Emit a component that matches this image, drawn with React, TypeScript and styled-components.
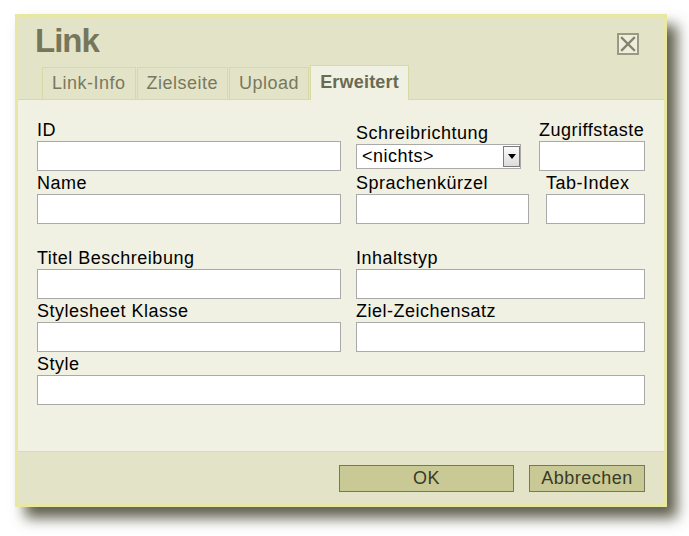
import * as React from 'react';
import styled, { createGlobalStyle } from 'styled-components';

const GlobalStyle = createGlobalStyle`
  html, body {
    margin: 0;
    padding: 0;
    background: #ffffff;
  }
  body {
    font-family: 'Liberation Sans', Arial, sans-serif;
  }
`;

const Page = styled.div`
  min-height: 536px;
  padding: 14px 0 0 15px;
  box-sizing: border-box;
`;

const Dialog = styled.div`
  width: 652px;
  height: 493px;
  box-sizing: border-box;
  border: 3px solid #e8e8a4;
  background: #e3e3c8;
  box-shadow: 10px 11px 13px rgba(55, 55, 32, 0.8);
  display: flex;
  flex-direction: column;
`;

const TitleRow = styled.div`
  display: flex;
  justify-content: space-between;
  align-items: flex-start;
  height: 48px;
  padding: 4px 25px 0 17px;
  box-sizing: border-box;
`;

const Title = styled.h1`
  margin: 0;
  font-size: 33px;
  line-height: 40px;
  font-weight: bold;
  letter-spacing: -1px;
  color: #76765b;
`;

const CloseButton = styled.button`
  margin-top: 12px;
  width: 22px;
  height: 22px;
  padding: 0;
  box-sizing: border-box;
  border: 2px solid #9a9a82;
  background: #eeeedf;
  display: flex;
  align-items: center;
  justify-content: center;
  cursor: pointer;
`;

const TabStrip = styled.div`
  display: flex;
  align-items: flex-end;
  gap: 1px;
  height: 35px;
  box-sizing: border-box;
  padding-left: 24px;
  border-bottom: 1px solid #d9d9a8;
`;

const Tab = styled.div<{ $active?: boolean }>`
  height: ${(p) => (p.$active ? '35px' : '32px')};
  margin-bottom: ${(p) => (p.$active ? '-1px' : '0')};
  box-sizing: border-box;
  padding: 0 9px;
  border: 1px solid #d9d9a8;
  border-bottom: none;
  background: ${(p) => (p.$active ? '#f0f0e3' : '#e3e3c8')};
  color: ${(p) => (p.$active ? '#6a6a50' : '#78785e')};
  font-size: 18px;
  letter-spacing: ${(p) => (p.$active ? '0.2px' : '0.5px')};
  font-weight: ${(p) => (p.$active ? 'bold' : 'normal')};
  line-height: ${(p) => (p.$active ? '33px' : '30px')};
  white-space: nowrap;
`;

const Body = styled.div`
  flex: 1;
  background: #f0f0e3;
  padding: 20px 19px 0;
  display: flex;
  flex-direction: column;
`;

const Section = styled.div<{ $space?: number }>`
  display: flex;
  flex-direction: column;
  gap: 2px;
  margin-bottom: ${(p) => p.$space ?? 0}px;
`;

const Row = styled.div`
  display: grid;
  grid-template-columns: 304px 289px;
  column-gap: 15px;
`;

const SubRow = styled.div`
  display: flex;
  justify-content: space-between;
  align-items: center;
`;

const Field = styled.div<{ $width?: number }>`
  display: flex;
  flex-direction: column;
  width: ${(p) => (p.$width ? `${p.$width}px` : 'auto')};
`;

const Label = styled.label`
  font-size: 18px;
  letter-spacing: 0.5px;
  line-height: 21px;
  color: #000;
  white-space: nowrap;
`;

const TextInput = styled.input`
  height: 30px;
  width: 100%;
  box-sizing: border-box;
  margin: 0;
  border: 1px solid #a9a9a9;
  background: #fff;
  font-family: inherit;
  font-size: 18px;
  padding: 0 4px;
  outline: none;
`;

const SelectBox = styled.div`
  position: relative;
  height: 25px;
  box-sizing: border-box;
  border: 1px solid #a9a9a9;
  background: #fff;
  font-size: 18px;
  letter-spacing: 0.5px;
  line-height: 23px;
  padding-left: 5px;
  color: #000;
`;

const SelectArrow = styled.div`
  position: absolute;
  top: 1px;
  right: 0;
  width: 17px;
  height: 21px;
  box-sizing: border-box;
  border: 1px solid #7b7b7b;
  background: linear-gradient(#fbfbfb, #dcdcdc);
  display: flex;
  align-items: center;
  justify-content: center;
`;

const Footer = styled.div`
  height: 53px;
  box-sizing: border-box;
  border-top: 1px solid #dcdcab;
  padding: 13px 19px 0 0;
  display: flex;
  justify-content: flex-end;
  align-items: flex-start;
  gap: 15px;
`;

const Button = styled.button<{ $width: number }>`
  width: ${(p) => p.$width}px;
  height: 27px;
  box-sizing: border-box;
  border: 1px solid #77775b;
  background: #c9c995;
  color: #3a3a28;
  font-family: inherit;
  font-size: 18px;
  letter-spacing: 0.5px;
  padding: 0;
  cursor: pointer;
`;

function TextField({ label, width }: { label: string; width?: number }) {
  return (
    <Field $width={width}>
      <Label>{label}</Label>
      <TextInput type='text' />
    </Field>
  );
}

export default function App() {
  return (
    <Page>
      <GlobalStyle />
      <Dialog>
        <TitleRow>
          <Title>Link</Title>
          <CloseButton aria-label='Schließen'>
            <svg width='16' height='16' viewBox='0 0 16 16'>
              <path
                d='M2 2 L14 14 M14 2 L2 14'
                stroke='#84846c'
                strokeWidth='2.4'
                strokeLinecap='square'
              />
            </svg>
          </CloseButton>
        </TitleRow>
        <TabStrip>
          <Tab>Link-Info</Tab>
          <Tab>Zielseite</Tab>
          <Tab>Upload</Tab>
          <Tab $active>Erweitert</Tab>
        </TabStrip>
        <Body>
          <Section $space={24}>
            <Row>
              <TextField label='ID' />
              <SubRow>
                <Field $width={165}>
                  <Label>Schreibrichtung</Label>
                  <SelectBox>
                    &lt;nichts&gt;
                    <SelectArrow>
                      <svg width='8' height='5' viewBox='0 0 8 5'>
                        <path d='M0 0 H8 L4 5 Z' fill='#000' />
                      </svg>
                    </SelectArrow>
                  </SelectBox>
                </Field>
                <TextField label='Zugriffstaste' width={106} />
              </SubRow>
            </Row>
            <Row>
              <TextField label='Name' />
              <SubRow>
                <TextField label='Sprachenkürzel' width={173} />
                <TextField label='Tab-Index' width={99} />
              </SubRow>
            </Row>
          </Section>
          <Section>
            <Row>
              <TextField label='Titel Beschreibung' />
              <TextField label='Inhaltstyp' />
            </Row>
            <Row>
              <TextField label='Stylesheet Klasse' />
              <TextField label='Ziel-Zeichensatz' />
            </Row>
            <TextField label='Style' />
          </Section>
        </Body>
        <Footer>
          <Button $width={175}>OK</Button>
          <Button $width={116}>Abbrechen</Button>
        </Footer>
      </Dialog>
    </Page>
  );
}
